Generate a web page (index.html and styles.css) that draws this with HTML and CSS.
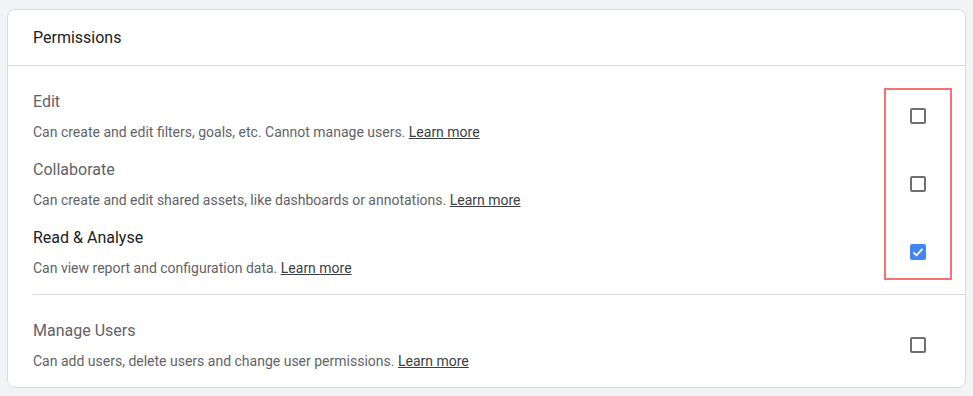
FILE: index.html
```html
<!DOCTYPE html>
<html lang="en">
<head>
<meta charset="utf-8">
<title>Permissions</title>
<link rel="stylesheet" href="styles.css">
</head>
<body>
<section class="card">
  <header class="card-header">Permissions</header>
  <div class="list">
    <div class="group">
      <div class="row">
        <div class="text">
          <div class="title">Edit</div>
          <div class="desc">Can create and edit filters, goals, etc. Cannot manage users. <a href="#">Learn more</a></div>
        </div>
        <span class="checkbox"></span>
      </div>
      <div class="row">
        <div class="text">
          <div class="title">Collaborate</div>
          <div class="desc">Can create and edit shared assets, like dashboards or annotations. <a href="#">Learn more</a></div>
        </div>
        <span class="checkbox"></span>
      </div>
      <div class="row">
        <div class="text">
          <div class="title selected">Read &amp; Analyse</div>
          <div class="desc">Can view report and configuration data. <a href="#">Learn more</a></div>
        </div>
        <span class="checkbox checked"><svg viewBox="0 0 16 16" width="16" height="16"><path d="M3.4 8.3l3.1 3 6-6.4" fill="none" stroke="#fff" stroke-width="1.8"/></svg></span>
      </div>
      <div class="highlight"></div>
    </div>
    <div class="divider"></div>
    <div class="row last">
      <div class="text">
        <div class="title">Manage Users</div>
        <div class="desc">Can add users, delete users and change user permissions. <a href="#">Learn more</a></div>
      </div>
      <span class="checkbox"></span>
    </div>
  </div>
</section>
</body>
</html>
```
FILE: styles.css
```css
html, body {
  margin: 0;
  padding: 0;
  background: #f1f3f4;
  font-family: Roboto, "Noto Sans", Arial, sans-serif;
}
body {
  padding: 9px 7px 0 7px;
}
.card {
  width: 959px;
  box-sizing: border-box;
  background: #fff;
  border: 1px solid #dadce0;
  border-radius: 8px;
}
.card-header {
  height: 56px;
  box-sizing: border-box;
  padding-left: 25px;
  display: flex;
  align-items: center;
  font-size: 16px;
  color: #202124;
  border-bottom: 1px solid #dadce0;
}
.list {
  padding: 16px 0 16px 0;
}
.group {
  position: relative;
  padding-bottom: 8px;
}
.row {
  display: flex;
  align-items: center;
  justify-content: space-between;
  padding: 8px 39px 8px 25px;
}
.row.last {
  padding-top: 24px;
  padding-bottom: 0;
}
.title {
  font-size: 16px;
  line-height: 24px;
  color: #5f6368;
}
.title.selected {
  color: #202124;
}
.desc {
  margin-top: 8px;
  font-size: 14px;
  line-height: 20px;
  color: #5f6368;
}
.desc a {
  color: #3c4043;
  text-decoration: underline;
}
.checkbox {
  width: 16px;
  height: 16px;
  box-sizing: border-box;
  border: 2px solid #6f6f6f;
  border-radius: 2px;
  display: flex;
  align-items: center;
  justify-content: center;
  flex: none;
}
.checkbox.checked {
  background: #4285f4;
  border: none;
}
.divider {
  height: 1px;
  background: #dadce0;
  margin-left: 25px;
}
.highlight {
  position: absolute;
  top: 6px;
  right: 13px;
  width: 68px;
  height: 192px;
  box-sizing: border-box;
  border: 2px solid #f47174;
  pointer-events: none;
}
```
